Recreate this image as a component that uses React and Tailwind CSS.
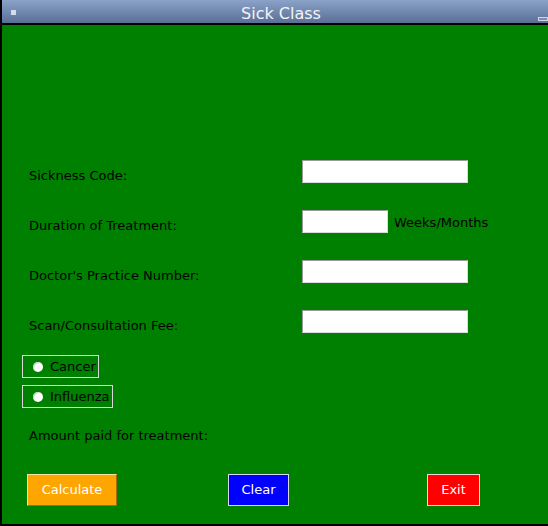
import React from "react";

const font = { fontFamily: '"DejaVu Sans", sans-serif' };

const Field = ({ label, width = "w-[166px]", suffix }) => (
  <div className="flex h-[23px] items-start">
    <div className="w-[273px] pt-[8px] text-[13px] leading-[16px] text-black">{label}</div>
    <div
      className={`${width} h-[23px] border border-t-[#9a9a9a] border-l-[#9a9a9a] border-b-[#dcdcdc] border-r-[#dcdcdc] bg-white`}
    />
    {suffix && <div className="ml-[6px] pt-[5px] text-[13px] leading-[16px] text-black">{suffix}</div>}
  </div>
);

const Radio = ({ label }) => (
  <div className="ml-[20px] flex h-[23px] w-fit items-center border border-[#d8d8d8] pl-[10px] pr-[2px]">
    <div className="h-[10px] w-[10px] rounded-full bg-white shadow-[inset_1px_1px_1px_#c8c8c8]" />
    <span className="ml-[7px] text-[13px] leading-[16px] text-black">{label}</span>
  </div>
);

export default function App() {
  return (
    <div className="h-[526px] w-[548px] overflow-hidden border-b-2 border-l-2 border-black" style={font}>
      {/* title bar */}
      <div className="relative flex h-[23px] items-center justify-center bg-gradient-to-b from-[#8ba3c9] to-[#5a6f96] pl-[12px] pt-[5px]">
        <div className="absolute left-[9px] top-[10px] h-[5px] w-[5px] bg-[#d5dbeb]" />
        <span className="text-[16px] leading-[20px] text-[#f4f4f4]">Sick Class</span>
        <div className="absolute right-0 top-[17px] h-[4px] w-[10px] border border-[#d0d6e6] bg-[#7a8db0]" />
      </div>
      <div className="h-[2px] bg-black" />

      {/* body */}
      <div className="flex h-[499px] flex-col bg-[#008000]">
        <div className="flex flex-col gap-[27px] pl-[27px] pt-[135px]">
          <Field label="Sickness Code:" />
          <Field label="Duration of Treatment:" width="w-[86px]" suffix="Weeks/Months" />
          <Field label="Doctor's Practice Number:" />
          <Field label="Scan/Consultation Fee:" />
        </div>

        <div className="mt-[22px] flex flex-col gap-[7px]">
          <Radio label="Cancer" />
          <Radio label="Influenza" />
        </div>

        <div className="mt-[20px] pl-[27px] text-[13px] leading-[16px] text-black">Amount paid for treatment:</div>

        <div className="mt-[30px] flex text-[13px] text-white">
          <button className="ml-[25px] flex h-[32px] w-[90px] items-center justify-center border border-t-[#f3e2a8] border-l-[#f3e2a8] border-b-[#a86a00] border-r-[#a86a00] bg-[#ffa500]">
            Calculate
          </button>
          <button className="ml-[111px] flex h-[32px] w-[61px] items-center justify-center border border-[#d8d8f0] bg-[#0000ff]">
            Clear
          </button>
          <button className="ml-[138px] flex h-[32px] w-[53px] items-center justify-center border border-[#f0d8d8] bg-[#ff0000]">
            Exit
          </button>
        </div>
      </div>
    </div>
  );
}
